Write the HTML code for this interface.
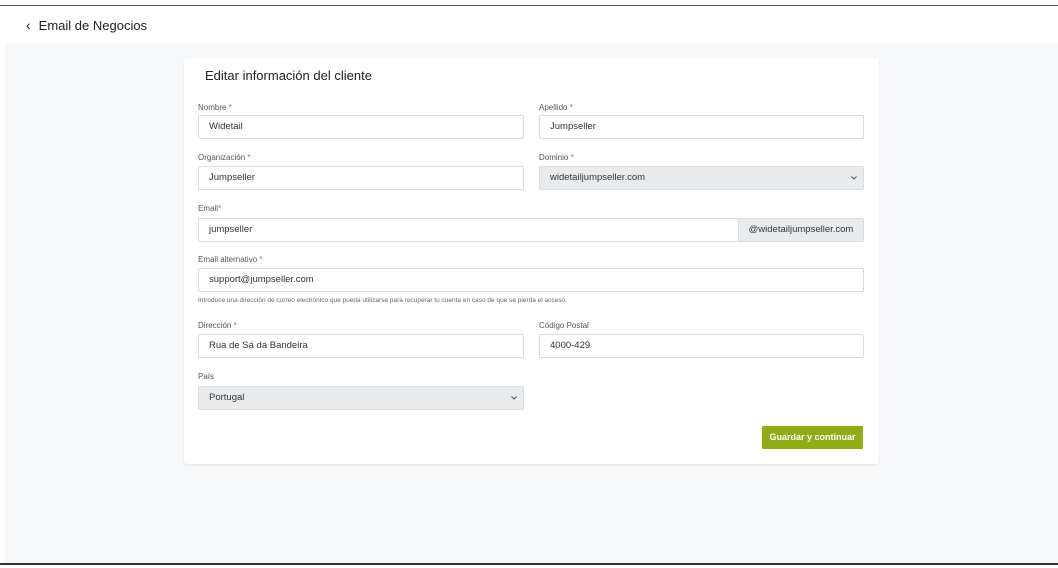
<!DOCTYPE html>
<html><head><meta charset="utf-8"><style>
*{box-sizing:border-box;margin:0;padding:0}
body{width:1058px;height:568px;background:#fff;font-family:"Liberation Sans",sans-serif;position:relative;overflow:hidden;color:#333}
.topline{position:absolute;left:0;top:5px;width:1058px;height:1px;background:#555}
.hdr{position:absolute;left:26px;top:17px;font-size:13px;color:#222}
.bg{position:absolute;left:5px;top:43px;width:1053px;height:520px;background:#f7f8f9}
.botline{position:absolute;left:0;top:563px;width:1058px;height:2px;background:#333}
.card{position:absolute;left:184px;top:58px;width:695px;height:406px;background:#fff;border-radius:3px;box-shadow:0 1px 2px rgba(0,0,0,.08)}
.t{position:absolute;left:205px;top:68px;font-size:13px;color:#222}
.l{position:absolute;font-size:8px;color:#555}
.l i{color:#d9534f;font-style:normal}
.in{position:absolute;height:24px;border:1px solid #d8dbde;border-radius:2px;background:#fff;font-size:9.5px;color:#333;padding:0 10px;line-height:22px}
.sel{background:#e9ecef}
.sel svg{position:absolute;right:6px;top:9px}
.help{position:absolute;left:198px;top:297px;font-size:6.5px;color:#666}
.btn{position:absolute;left:762px;top:426px;width:101px;height:23px;background:#8fad15;color:#fff;font-size:9px;font-weight:bold;text-align:center;line-height:23px;border-radius:1px}
</style></head><body>
<div class="topline"></div>
<div class="hdr"><span style="font-size:14px;margin-right:8px">&#x2039;</span>Email de Negocios</div>
<div class="bg"></div>
<div class="botline"></div>
<div class="card"></div>
<div class="t">Editar información del cliente</div>
<div class="l" style="left:198px;top:103px">Nombre <i>*</i></div>
<div class="in" style="left:198px;top:115px;width:326px">Widetail</div>
<div class="l" style="left:539px;top:103px">Apellido <i>*</i></div>
<div class="in" style="left:539px;top:115px;width:325px">Jumpseller</div>
<div class="l" style="left:198px;top:153px">Organización <i>*</i></div>
<div class="in" style="left:198px;top:166px;width:326px">Jumpseller</div>
<div class="l" style="left:539px;top:153px">Dominio <i>*</i></div>
<div class="in sel" style="left:539px;top:166px;width:325px">widetailjumpseller.com<svg width="6" height="4" viewBox="0 0 6 4"><path d="M0.5 0.5L3 3L5.5 0.5" fill="none" stroke="#555" stroke-width="1"/></svg></div>
<div class="l" style="left:198px;top:204px">Email<i>*</i></div>
<div class="in" style="left:198px;top:218px;width:541px">jumpseller</div>
<div class="in" style="left:738px;top:218px;width:126px;background:#e9ecef;text-align:center;padding:0">@widetailjumpseller.com</div>
<div class="l" style="left:198px;top:255px">Email alternativo <i>*</i></div>
<div class="in" style="left:198px;top:268px;width:666px">support@jumpseller.com</div>
<div class="help">Introduce una dirección de correo electrónico que pueda utilizarse para recuperar tu cuenta en caso de que se pierda el acceso.</div>
<div class="l" style="left:198px;top:321px">Dirección <i>*</i></div>
<div class="in" style="left:198px;top:334px;width:326px">Rua de Sá da Bandeira</div>
<div class="l" style="left:539px;top:321px">Código Postal</div>
<div class="in" style="left:539px;top:334px;width:325px">4000-429</div>
<div class="l" style="left:198px;top:372px">País</div>
<div class="in sel" style="left:198px;top:386px;width:326px">Portugal<svg width="6" height="4" viewBox="0 0 6 4"><path d="M0.5 0.5L3 3L5.5 0.5" fill="none" stroke="#555" stroke-width="1"/></svg></div>
<div class="btn">Guardar y continuar</div>
</body></html>
